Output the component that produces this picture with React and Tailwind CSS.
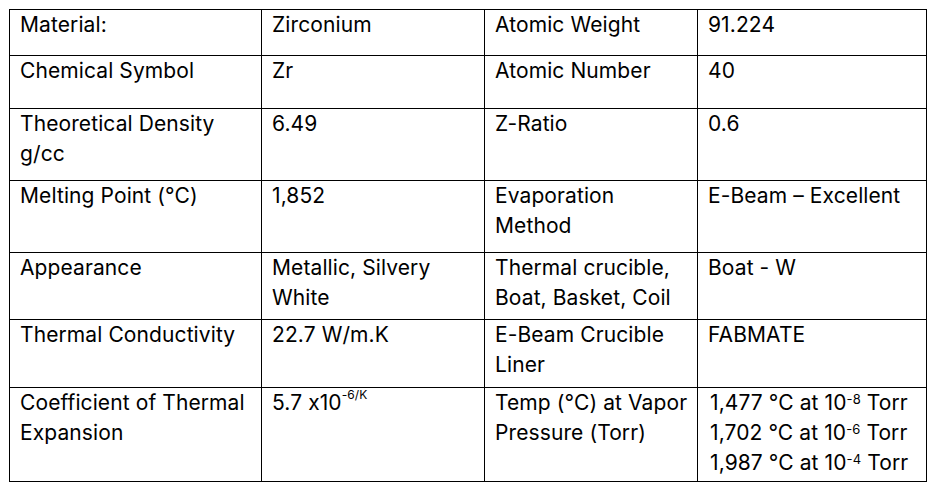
import React from "react";

const rows = [
  { h: 46, c: ["Material:", "Zirconium", "Atomic Weight", "91.224"] },
  { h: 53, c: ["Chemical Symbol", "Zr", "Atomic Number", "40"] },
  { h: 72, c: [<>Theoretical Density<br />g/cc</>, "6.49", "Z-Ratio", "0.6"] },
  { h: 72, c: ["Melting Point (°C)", "1,852", <>Evaporation<br />Method</>, "E-Beam – Excellent"] },
  { h: 67, c: ["Appearance", <>Metallic, Silvery<br />White</>, <>Thermal crucible,<br />Boat, Basket, Coil</>, "Boat - W"] },
  { h: 68, c: ["Thermal Conductivity", "22.7 W/m.K", <>E-Beam Crucible<br />Liner</>, "FABMATE"] },
  {
    h: 94,
    c: [
      <>Coefficient of Thermal<br />Expansion</>,
      <>5.7 x10<sup className="text-[12px] relative -top-[3px] align-super leading-none">-6/K</sup></>,
      <>Temp (°C) at Vapor<br />Pressure (Torr)</>,
      <span className="block pl-[2px]">
        1,477 °C at 10<sup className="text-[13px] leading-none">-8</sup> Torr<br />
        1,702 °C at 10<sup className="text-[13px] leading-none">-6</sup> Torr<br />
        1,987 °C at 10<sup className="text-[13px] leading-none">-4</sup> Torr
      </span>,
    ],
  },
];

export default function App() {
  return (
    <div className="w-[937px] h-[492px] bg-white pt-[9px] pl-[9px] text-black font-['Inter','Liberation_Sans',sans-serif] [font-feature-settings:'calt'_0]">
      <table className="border-collapse table-fixed w-[917px]">
        <colgroup>
          <col className="w-[252px]" />
          <col className="w-[223px]" />
          <col className="w-[213px]" />
          <col className="w-[229px]" />
        </colgroup>
        <tbody>
          {rows.map((r, i) => (
            <tr key={i} style={{ height: r.h }}>
              {r.c.map((c, j) => (
                <td
                  key={j}
                  className="border border-black align-top pl-[10px] pr-[2px] pt-0 pb-0 text-[21px] leading-[30px] tracking-[0.1px] whitespace-nowrap"
                >
                  <div>{c}</div>
                </td>
              ))}
            </tr>
          ))}
        </tbody>
      </table>
    </div>
  );
}
